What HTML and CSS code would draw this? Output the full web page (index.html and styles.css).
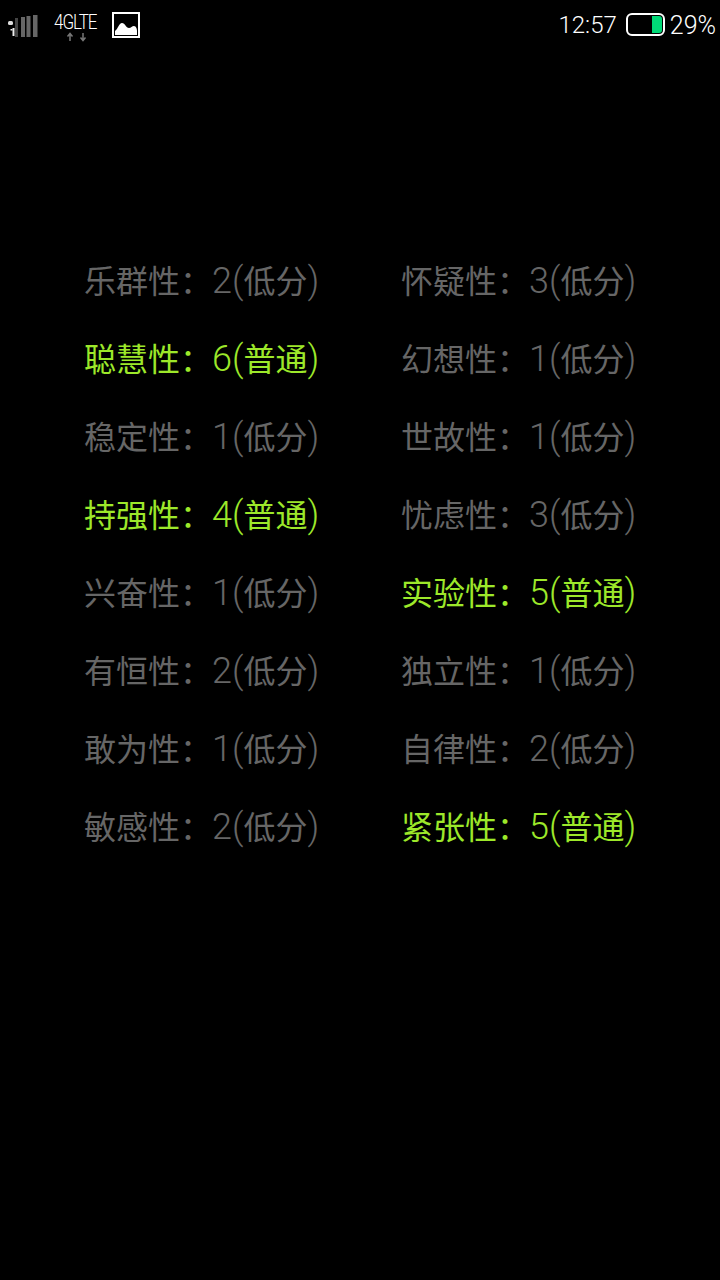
FILE: index.html
```html
<!DOCTYPE html>
<html>
  <head>
    <meta charset="UTF-8"/>
    <link rel="stylesheet" href="styles.css">
  </head>
  <body>
    <div class="status">
      <div class="status-left">
        <svg class="signal" width="32" height="24" viewBox="0 0 32 24">
          <rect x="0" y="6" width="5" height="4" rx="1.500" fill="#ddd"/>
          <rect x="4.500" y="13" width="2" height="8" fill="#eee"/>
          <rect x="2.500" y="14" width="2" height="1.500" fill="#eee"/>
          <rect x="7" y="3" width="3" height="19" fill="#444"/>
          <rect x="13" y="2" width="4" height="20" fill="#666"/>
          <rect x="18.500" y="1" width="4" height="21" fill="#666"/>
          <rect x="25" y="0" width="4.500" height="22" fill="#666"/>
        </svg>
        <div class="net">
          <span class="net-label">4GLTE</span>
          <svg width="34" height="10" viewBox="0 0 34 10">
            <path d="M16 9V2M13.500 4.500L16 1.500L18.500 4.500" stroke="#777" stroke-width="1.500" fill="none"/>
            <path d="M29 1V8M26.500 5.500L29 8.500L31.500 5.500" stroke="#777" stroke-width="1.500" fill="none"/>
          </svg>
        </div>
        <svg class="pic" width="29" height="27" viewBox="0 0 29 27">
          <rect x="1" y="1" width="26" height="24" fill="none" stroke="#fff" stroke-width="2"/>
          <path d="M3 23V19C6 17 7 11 10 11C13 11 14 16 17 16C19 16 20 14 22 14C24 14 25 17 25 19V23Z" fill="#fff"/>
        </svg>
      </div>
      <div class="status-right">
        <span class="clock">12:57</span>
        <div class="battery"><div class="battery-level"></div></div>
        <span class="percent">29%</span>
      </div>
    </div>
    <div class="scores">
      <div class="score">乐群性：<span class="num">2(</span>低分<span class="num">)</span></div>
      <div class="score">怀疑性：<span class="num">3(</span>低分<span class="num">)</span></div>
      <div class="score high">聪慧性：<span class="num">6(</span>普通<span class="num">)</span></div>
      <div class="score">幻想性：<span class="num">1(</span>低分<span class="num">)</span></div>
      <div class="score">稳定性：<span class="num">1(</span>低分<span class="num">)</span></div>
      <div class="score">世故性：<span class="num">1(</span>低分<span class="num">)</span></div>
      <div class="score high">持强性：<span class="num">4(</span>普通<span class="num">)</span></div>
      <div class="score">忧虑性：<span class="num">3(</span>低分<span class="num">)</span></div>
      <div class="score">兴奋性：<span class="num">1(</span>低分<span class="num">)</span></div>
      <div class="score high">实验性：<span class="num">5(</span>普通<span class="num">)</span></div>
      <div class="score">有恒性：<span class="num">2(</span>低分<span class="num">)</span></div>
      <div class="score">独立性：<span class="num">1(</span>低分<span class="num">)</span></div>
      <div class="score">敢为性：<span class="num">1(</span>低分<span class="num">)</span></div>
      <div class="score">自律性：<span class="num">2(</span>低分<span class="num">)</span></div>
      <div class="score">敏感性：<span class="num">2(</span>低分<span class="num">)</span></div>
      <div class="score high">紧张性：<span class="num">5(</span>普通<span class="num">)</span></div>
    </div>
  </body>
</html>
```

FILE: styles.css
```css
body
{
  margin: 0;
  padding: 0;
  height: 1280px;
  overflow: hidden;
  background: #000;
  color: #fff;
  font-family: Roboto, "Noto Sans CJK SC", sans-serif;
}
.status
{
  display: flex;
  justify-content: space-between;
  align-items: center;
  height: 50px;
  padding: 0 4px 0 8px;
}
.status-left
{
  display: flex;
  align-items: center;
}
.signal
{
  margin-top: 4px;
}
.net
{
  display: flex;
  flex-direction: column;
  width: 44px;
  margin-left: 14px;
  margin-top: 4px;
}
.net-label
{
  font-size: 20px;
  line-height: 20px;
  letter-spacing: -1.2px;
  font-weight: 300;
  transform: scaleX(.85);
  transform-origin: left;
}
.net svg
{
  display: block;
}
.pic
{
  margin-left: 14px;
}
.status-right
{
  display: flex;
  align-items: center;
  font-size: 24px;
}
.clock
{
  font-weight: 300;
}
.percent
{
  font-size: 25px;
  font-weight: 300;
}
.battery
{
  display: flex;
  justify-content: flex-end;
  box-sizing: border-box;
  width: 39px;
  height: 23px;
  margin: -2px 5px 0 9px;
  padding: 1px;
  border: 2px solid #fff;
  border-radius: 6px;
}
.battery-level
{
  width: 10px;
  background: #00d977;
  border-radius: 0 3px 3px 0;
}
.scores
{
  display: grid;
  grid-template-columns: 317px 1fr;
  grid-auto-rows: 78px;
  align-items: center;
  padding: 190px 0 0 84px;
}
.score
{
  font-size: 32px;
  white-space: nowrap;
  color: #666;
}
.num
{
  font-size: 36px;
  font-weight: 300;
}
.high
{
  color: #9de82a;
}
```
